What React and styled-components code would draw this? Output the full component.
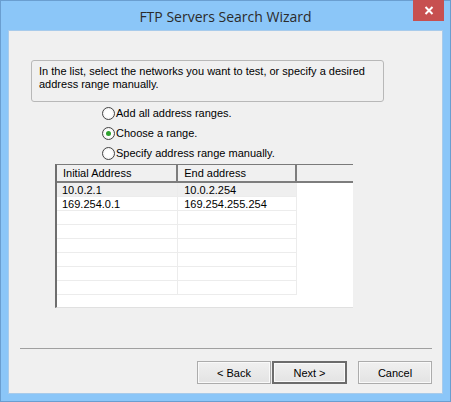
import styled, { createGlobalStyle } from "styled-components"

const Global = createGlobalStyle`
html, body { margin:0; padding:0; background:#8bc5f7; }
* { box-sizing:border-box; }
`

const Window = styled.div`
width:451px;
height:402px;
background:#8bc6f8;
border:1px solid #6a9ed0;
display:flex;
flex-direction:column;
font-family:"Liberation Sans", Arial, sans-serif;
font-size:11px;
color:#000;
`

const TitleBar = styled.div`
height:29px;
position:relative;
display:flex;
align-items:center;
justify-content:center;
`

const Title = styled.div`
font-family:"Open Sans", "Noto Sans", sans-serif;
font-size:14px;
color:#2b2b2b;
margin-top:1px;
`

const CloseButton = styled.div`
position:absolute;
top:-1px;
right:6px;
width:31px;
height:21px;
background:#c75050;
display:flex;
align-items:center;
justify-content:center;
`

const Client = styled.div`
flex:1;
margin:0 7px 7px 7px;
background:#f0f0f0;
border:1px solid #a8cbeb;
display:flex;
flex-direction:column;
`

const InfoBox = styled.div`
margin:29px 0 0 22px;
width:353px;
height:42px;
border:1px solid #b8b8b8;
border-radius:3px;
padding:4px 7px;
line-height:13px;
`

const RadioGroup = styled.div`
margin:4px 0 0 93px;
display:flex;
flex-direction:column;
gap:6px;
`

const RadioRow = styled.label`
display:flex;
align-items:center;
height:14px;
`

const RadioCircle = styled.span`
width:13px;
height:13px;
border-radius:50%;
border:1px solid #444;
background:radial-gradient(circle, #fff 40%, #e6e6e6 100%);
display:flex;
align-items:center;
justify-content:center;
margin-right:1px;
&::after{
  content:"";
  width:5px;
  height:5px;
  border-radius:50%;
  background:${props => props.checked ? "#2ea12e" : "transparent"};
}
`

const ListView = styled.div`
margin:4px 0 0 46px;
width:298px;
height:144px;
background:#fff;
border-top:1px solid #7a7a7a;
border-left:2px solid #6e6e6e;
border-bottom:1px solid #e0e0e0;
display:flex;
flex-direction:column;
overflow:hidden;
`

const Header = styled.div`
display:flex;
height:18px;
background:#f0f0f0;
border-bottom:2px solid #7d7d7d;
flex-shrink:0;
`

const HeaderCell = styled.div`
width:${props => props.w}px;
padding-left:6px;
display:flex;
align-items:center;
border-right:${props => props.last ? "none" : "2px solid #7d7d7d"};
`

const Row = styled.div`
display:flex;
height:14px;
flex-shrink:0;
`

const Cell = styled.div`
width:${props => props.w}px;
padding-left:${props => props.pad}px;
line-height:14px;
background:${props => props.sel ? "#efefef" : "#fff"};
border-right:${props => props.last ? "none" : "1px solid #ececec"};
border-bottom:${props => props.last ? "none" : "1px solid #ececec"};
`

const Separator = styled.div`
margin:auto 10px 0 11px;
height:1px;
background:#a0a0a0;
`

const ButtonRow = styled.div`
display:flex;
justify-content:flex-end;
padding:12px 10px 9px 0;
`

const Button = styled.div`
width:${props => props.def ? 75 : 74}px;
height:23px;
margin-left:${props => props.gap}px;
display:flex;
align-items:center;
justify-content:center;
background:linear-gradient(#f0f0f0, #e3e3e3);
border:${props => props.def ? "2px solid #6c6c6c" : "1px solid #acacac"};
box-shadow:inset 0 0 0 1px ${props => props.def ? "#fafafa" : "#f9f9f9"};
color:#000;
`

const rows = [
  ["10.0.2.1", "10.0.2.254"],
  ["169.254.0.1", "169.254.255.254"],
  ["", ""], ["", ""], ["", ""], ["", ""], ["", ""], ["", ""],
]

const App = () => {
  return (
    <>
      <Global />
      <Window>
        <TitleBar>
          <Title>FTP Servers Search Wizard</Title>
          <CloseButton>
            <svg width="10" height="9" viewBox="0 0 10 9">
              <path d="M1.5 1 L8.5 8 M8.5 1 L1.5 8" stroke="#fff" strokeWidth="2" />
            </svg>
          </CloseButton>
        </TitleBar>
        <Client>
          <InfoBox>
            In the list, select the networks you want to test, or specify a desired address range manually.
          </InfoBox>
          <RadioGroup>
            <RadioRow><RadioCircle />Add all address ranges.</RadioRow>
            <RadioRow><RadioCircle checked />Choose a range.</RadioRow>
            <RadioRow><RadioCircle />Specify address range manually.</RadioRow>
          </RadioGroup>
          <ListView>
            <Header>
              <HeaderCell w={122}>Initial Address</HeaderCell>
              <HeaderCell w={120}>End address</HeaderCell>
              <HeaderCell w={56} last />
            </Header>
            {rows.map((r, i) => (
              <Row key={i}>
                <Cell w={122} pad={5} sel={i === 0}>{r[0]}</Cell>
                <Cell w={120} pad={6} sel={i === 0}>{r[1]}</Cell>
                <Cell w={56} last />
              </Row>
            ))}
          </ListView>
          <Separator />
          <ButtonRow>
            <Button>&lt; Back</Button>
            <Button def gap={1}>Next &gt;</Button>
            <Button gap={11}>Cancel</Button>
          </ButtonRow>
        </Client>
      </Window>
    </>
  )
}

export default App
